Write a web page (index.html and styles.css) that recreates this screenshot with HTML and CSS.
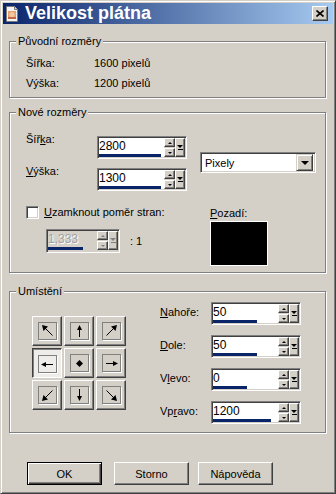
FILE: index.html
```html
<!DOCTYPE html>
<html lang="cs">
<head>
    <meta charset="UTF-8">
    <title>Velikost plátna</title>
    <link rel="stylesheet" href="styles.css">
</head>
<body>
    <div class="window">
        <div class="titlebar">
            <svg class="app-icon" width="16" height="16" viewBox="0 0 16 16">
                <path d="M2.5 0.5h8l3 3v12h-11z" fill="#f4f4f4" stroke="#7a7a7a"/>
                <path d="M10.5 0.5v3h3" fill="#d8d8d8" stroke="#7a7a7a"/>
                <rect x="4" y="5" width="8" height="8" fill="#e8a070"/>
                <circle cx="8" cy="8.5" r="2.6" fill="#f6c8a0"/>
                <rect x="4" y="11" width="8" height="2" fill="#c06848"/>
            </svg>
            <span class="title">Velikost plátna</span>
            <span class="close">
                <svg width="8" height="7" viewBox="0 0 8 7">
                    <path d="M0.5 0.5l7 6M7.5 0.5l-7 6" stroke="#000" stroke-width="1.6"/>
                </svg>
            </span>
        </div>

        <fieldset class="group g1">
            <legend>Původní rozměry</legend>
            <div class="info">
                <span>Šířka:</span><span>1600 pixelů</span>
                <span>Výška:</span><span>1200 pixelů</span>
            </div>
        </fieldset>

        <fieldset class="group g2">
            <legend>Nové rozměry</legend>
            <div class="g2-body">
                <div class="g2-left">
                    <div class="field">
                        <label>Šíř<u>k</u>a:</label>
                        <div class="spin">
                            <div class="spin-text"><span class="val">2800</span><div class="bar"><i style="width:95%"></i></div></div>
                            <div class="spin-btns"><b class="sb up"></b><b class="sb down"></b></div>
                            <b class="pop"></b>
                        </div>
                    </div>
                    <div class="field">
                        <label><u>V</u>ýška:</label>
                        <div class="spin">
                            <div class="spin-text"><span class="val">1300</span><div class="bar"><i style="width:95%"></i></div></div>
                            <div class="spin-btns"><b class="sb up"></b><b class="sb down"></b></div>
                            <b class="pop"></b>
                        </div>
                    </div>
                    <div class="check-row">
                        <span class="checkbox"></span>
                        <span><u>U</u>zamknout poměr stran:</span>
                    </div>
                    <div class="ratio-row">
                        <div class="spin small disabled">
                            <div class="spin-text"><span class="val">1,333</span><div class="bar"><i style="width:72%"></i></div></div>
                            <div class="spin-btns"><b class="sb up"></b><b class="sb down"></b></div>
                            <b class="pop"></b>
                        </div>
                        <span class="ratio">: 1</span>
                    </div>
                </div>
                <div class="g2-right">
                    <div class="select">
                        <span class="select-text">Pixely</span>
                        <b class="dd"></b>
                    </div>
                    <div class="bg-label"><u>P</u>ozadí:</div>
                    <div class="swatch"></div>
                </div>
            </div>
        </fieldset>

        <fieldset class="group g3">
            <legend>Umístění</legend>
            <div class="g3-body">
                <div class="anchors">
                    <div class="anchor"><span class="pad"><svg viewBox="0 0 17 16"><path d="M13.5 12.5l-9-9" stroke="#000"/><path d="M3 2l6 1.5-4.5 4.5z"/></svg></span></div>
                    <div class="anchor"><span class="pad"><svg viewBox="0 0 17 16"><path d="M8.5 14v-10" stroke="#000"/><path d="M8.5 2l2.5 5h-5z"/></svg></span></div>
                    <div class="anchor"><span class="pad"><svg viewBox="0 0 17 16"><path d="M3.5 12.5l9-9" stroke="#000"/><path d="M14 2l-6 1.5 4.5 4.5z"/></svg></span></div>
                    <div class="anchor active"><span class="pad"><svg viewBox="0 0 17 16"><path d="M14 8.5h-10" stroke="#000"/><path d="M2 8.5l5-2.5v5z"/></svg></span></div>
                    <div class="anchor"><span class="pad"><svg viewBox="0 0 17 16"><path d="M8.5 5l3.5 3.5-3.5 3.5-3.5-3.5z"/></svg></span></div>
                    <div class="anchor"><span class="pad"><svg viewBox="0 0 17 16"><path d="M3 8.5h10" stroke="#000"/><path d="M15 8.5l-5-2.5v5z"/></svg></span></div>
                    <div class="anchor"><span class="pad"><svg viewBox="0 0 17 16"><path d="M13.5 3.5l-9 9" stroke="#000"/><path d="M3 14l1.5-6 4.5 4.5z"/></svg></span></div>
                    <div class="anchor"><span class="pad"><svg viewBox="0 0 17 16"><path d="M8.5 2v10" stroke="#000"/><path d="M8.5 14l2.5-5h-5z"/></svg></span></div>
                    <div class="anchor"><span class="pad"><svg viewBox="0 0 17 16"><path d="M3.5 3.5l9 9" stroke="#000"/><path d="M14 14l-1.5-6-4.5 4.5z"/></svg></span></div>
                </div>
                <div class="offsets">
                    <div class="offset-row">
                        <label><u>N</u>ahoře:</label>
                        <div class="spin">
                            <div class="spin-text"><span class="val">50</span><div class="bar"><i style="width:68%"></i></div></div>
                            <div class="spin-btns"><b class="sb up"></b><b class="sb down"></b></div>
                            <b class="pop"></b>
                        </div>
                    </div>
                    <div class="offset-row">
                        <label><u>D</u>ole:</label>
                        <div class="spin">
                            <div class="spin-text"><span class="val">50</span><div class="bar"><i style="width:68%"></i></div></div>
                            <div class="spin-btns"><b class="sb up"></b><b class="sb down"></b></div>
                            <b class="pop"></b>
                        </div>
                    </div>
                    <div class="offset-row">
                        <label>V<u>l</u>evo:</label>
                        <div class="spin">
                            <div class="spin-text"><span class="val">0</span><div class="bar"><i style="width:52%"></i></div></div>
                            <div class="spin-btns"><b class="sb up"></b><b class="sb down"></b></div>
                            <b class="pop"></b>
                        </div>
                    </div>
                    <div class="offset-row">
                        <label>Vp<u>r</u>avo:</label>
                        <div class="spin">
                            <div class="spin-text"><span class="val">1200</span><div class="bar"><i style="width:89%"></i></div></div>
                            <div class="spin-btns"><b class="sb up"></b><b class="sb down"></b></div>
                            <b class="pop"></b>
                        </div>
                    </div>
                </div>
            </div>
        </fieldset>

        <div class="actions">
            <button class="btn default">OK</button>
            <button class="btn storno">Storno</button>
            <button class="btn help">Nápověda</button>
        </div>
    </div>
</body>
</html>
```

FILE: styles.css
```css
* {
    box-sizing: border-box;
}

body {
    margin: 0;
    background: #d4d0c8;
    font-family: "Liberation Sans", Arial, sans-serif;
    font-size: 11px;
    color: #000;
}

u {
    text-decoration: underline;
    text-underline-offset: 1px;
}

.window {
    width: 336px;
    height: 494px;
    padding: 2px;
    background: #d4d0c8;
    border: 1px solid;
    border-color: #d4d0c8 #404040 #404040 #d4d0c8;
    box-shadow: inset 1px 1px #fff, inset -1px -1px #808080;
}

/* title bar */
.titlebar {
    display: flex;
    align-items: center;
    height: 21px;
    background: linear-gradient(to right, #0a246a, #a6caf0);
}

.app-icon {
    margin-left: 1px;
    flex-shrink: 0;
}

.title {
    flex: 1;
    margin-left: 5px;
    color: #fff;
    font-size: 18px;
    font-weight: bold;
    line-height: 21px;
}

.close {
    display: flex;
    align-items: center;
    justify-content: center;
    width: 16px;
    height: 15px;
    margin-right: 5px;
    background: #d4d0c8;
    border: 1px solid;
    border-color: #fff #404040 #404040 #fff;
    box-shadow: inset -1px -1px #808080;
}

/* group boxes */
.group {
    margin: 0 7px 0 6px;
    padding: 0;
    min-inline-size: 0;
    border: 1px solid #808080;
    box-shadow: inset 1px 1px #fff, 1px 1px #fff;
}

.group legend {
    margin-left: 6px;
    padding: 0 2px;
    line-height: 13px;
    background: #d4d0c8;
}

.g1 {
    margin-top: 11px;
    height: 63px;
}

.g2 {
    margin-top: 8px;
    height: 167px;
}

.g3 {
    margin-top: 12px;
    height: 148px;
}

.info {
    display: grid;
    grid-template-columns: 68px auto;
    grid-auto-rows: 20px;
    align-items: center;
    padding: 5px 0 0 16px;
}

/* nove rozmery */
.g2-body {
    display: flex;
}

.g2-left {
    width: 190px;
    padding-left: 16px;
}

.field {
    display: flex;
    align-items: flex-start;
}

.field:first-child {
    margin-top: 17px;
}

.field + .field {
    margin-top: 9px;
}

.field label {
    width: 71px;
    margin-top: -3px;
    line-height: 13px;
}

.check-row {
    display: flex;
    align-items: center;
    gap: 5px;
    margin-top: 15px;
    line-height: 13px;
}

.checkbox {
    width: 13px;
    height: 13px;
    background: #fff;
    border: 1px solid;
    border-color: #808080 #fff #fff #808080;
    box-shadow: inset 1px 1px #404040, inset -1px -1px #d4d0c8;
}

.ratio-row {
    display: flex;
    align-items: center;
    margin: 10px 0 0 20px;
}

.ratio {
    margin-left: 10px;
}

.g2-right {
    padding-left: 0;
}

.select {
    display: flex;
    align-items: center;
    width: 116px;
    height: 21px;
    margin-top: 33px;
    padding: 2px;
    background: #fff;
    border: 1px solid;
    border-color: #808080 #fff #fff #808080;
    box-shadow: inset 1px 1px #404040, inset -1px -1px #d4d0c8;
}

.select-text {
    flex: 1;
    padding-left: 2px;
}

.dd {
    display: flex;
    align-items: center;
    justify-content: center;
    width: 17px;
    height: 17px;
    background: #d4d0c8;
    border: 1px solid;
    border-color: #d4d0c8 #404040 #404040 #d4d0c8;
    box-shadow: inset 1px 1px #fff, inset -1px -1px #808080;
}

.dd::after {
    content: "";
    border: 4px solid transparent;
    border-top: 4px solid #000;
    border-bottom: 0;
    margin-top: 1px;
}

.bg-label {
    margin: 34px 0 0 10px;
    line-height: 13px;
}

.swatch {
    width: 58px;
    height: 45px;
    margin: 1px 0 0 10px;
    background: #000;
    border: 1px solid #fff;
}

/* spin boxes */
.spin {
    display: flex;
    align-items: flex-start;
    width: 90px;
    height: 23px;
    padding: 1px;
    background: #d4d0c8;
    border: 1px solid;
    border-color: #808080 #fff #fff #808080;
    box-shadow: inset 1px 1px #404040, inset -1px -1px #d4d0c8;
}

.spin.small {
    width: 74px;
    height: 24px;
}

.spin-text {
    flex: 1;
    display: flex;
    flex-direction: column;
    height: 19px;
    background: #fff;
}

.spin.disabled .spin-text {
    background: #d4d0c8;
}

.val {
    flex: 1;
    padding-left: 0;
    font-size: 12px;
    line-height: 16px;
}

.spin.disabled .val {
    color: #a0a0a0;
    text-shadow: 1px 1px #fff;
}

.bar {
    height: 3px;
}

.bar i {
    display: block;
    height: 3px;
    background: #0a246a;
}

.spin-btns {
    display: flex;
    flex-direction: column;
    gap: 1px;
    width: 11px;
}

.sb,
.pop {
    display: flex;
    align-items: center;
    justify-content: center;
    background: #d4d0c8;
    border: 1px solid;
    border-color: #fff #404040 #404040 #fff;
    box-shadow: inset -1px -1px #808080;
}

.sb {
    height: 9px;
}

.sb::after {
    content: "";
    border: 2px solid transparent;
}

.up::after {
    border-bottom: 2px solid #000;
    border-top: 0;
}

.down::after {
    border-top: 2px solid #000;
    border-bottom: 0;
}

.pop {
    flex-direction: column;
    gap: 1px;
    width: 10px;
    height: 19px;
}

.pop::before {
    content: "";
    border: 3px solid transparent;
    border-top: 3px solid #000;
    border-bottom: 0;
}

.pop::after {
    content: "";
    width: 5px;
    height: 1px;
    background: #000;
}

.spin.disabled .up::after {
    border-bottom-color: #808080;
}

.spin.disabled .down::after,
.spin.disabled .pop::before {
    border-top-color: #808080;
}

.spin.disabled .pop::after {
    background: #808080;
}

/* umisteni */
.g3-body {
    display: flex;
    padding-left: 22px;
}

.anchors {
    display: grid;
    grid-template-columns: repeat(3, 30px);
    grid-auto-rows: 30px;
    gap: 2px;
    margin-top: 18px;
}

.anchor {
    display: flex;
    align-items: center;
    justify-content: center;
    background: #d4d0c8;
    border: 1px solid;
    border-color: #fff #404040 #404040 #fff;
    box-shadow: inset -1px -1px #808080;
}

.anchor.active {
    background: #eeede9;
    border-color: #404040 #fff #fff #404040;
    box-shadow: inset 1px 1px #808080;
    padding: 1px 0 0 1px;
}

.pad {
    display: block;
    width: 19px;
    height: 18px;
    border: 1px solid #808080;
    box-shadow: 1px 1px #fff;
}

.pad svg {
    display: block;
    width: 17px;
    height: 16px;
}

.offsets {
    display: flex;
    flex-direction: column;
    gap: 10px;
    margin: 4px 0 0 34px;
}

.offset-row {
    display: flex;
    align-items: center;
}

.offset-row label {
    width: 51px;
    margin-top: -3px;
}

/* buttons */
.actions {
    display: flex;
    margin-top: 29px;
    padding-left: 24px;
}

.btn {
    width: 75px;
    height: 23px;
    padding: 0;
    font-family: inherit;
    font-size: 11px;
    color: #000;
    background: #d4d0c8;
    border: 1px solid;
    border-color: #fff #404040 #404040 #fff;
    box-shadow: inset -1px -1px #808080;
}

.btn.default {
    border-color: #000;
    box-shadow: inset 1px 1px #fff, inset -1px -1px #404040, inset -2px -2px #808080;
}

.btn.storno {
    margin-left: 12px;
}

.btn.help {
    margin-left: 9px;
}
```
